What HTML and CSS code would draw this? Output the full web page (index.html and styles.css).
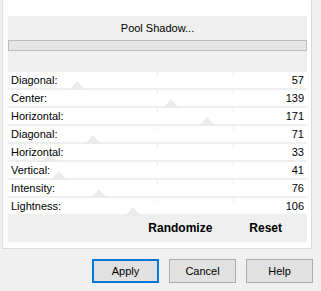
FILE: index.html
```html
<!DOCTYPE html>
<html lang="en">
<head>
    <meta charset="UTF-8">
    <title>Pool Shadow</title>
    <link rel="stylesheet" href="styles.css">
</head>
<body>
    <div class="pane">
        <div class="panel">
            <div class="panel-title">Pool Shadow...</div>
            <div class="progress"></div>

            <!-- Parameter rows, thumb position = value on a 0..255 track -->
            <div class="rows">
                <div class="row"><span class="thumb" style="left: 61px"></span><span class="label">Diagonal:</span><span class="value">57</span></div>
                <div class="row"><span class="thumb" style="left: 155px"></span><span class="label">Center:</span><span class="value">139</span></div>
                <div class="row"><span class="thumb" style="left: 191px"></span><span class="label">Horizontal:</span><span class="value">171</span></div>
                <div class="row"><span class="thumb" style="left: 77px"></span><span class="label">Diagonal:</span><span class="value">71</span></div>
                <div class="row"><span class="thumb" style="left: 34px"></span><span class="label">Horizontal:</span><span class="value">33</span></div>
                <div class="row"><span class="thumb" style="left: 43px"></span><span class="label">Vertical:</span><span class="value">41</span></div>
                <div class="row"><span class="thumb" style="left: 83px"></span><span class="label">Intensity:</span><span class="value">76</span></div>
                <div class="row"><span class="thumb" style="left: 117px"></span><span class="label">Lightness:</span><span class="value">106</span></div>
            </div>

            <div class="panel-actions">
                <span class="action">Randomize</span>
                <span class="action">Reset</span>
            </div>
        </div>
    </div>

    <div class="footer">
        <button class="btn btn-default">Apply</button>
        <button class="btn">Cancel</button>
        <button class="btn">Help</button>
    </div>
</body>
</html>
```

FILE: styles.css
```css
body {
    font-family: 'Liberation Sans', Arial, sans-serif;
    font-size: 11px;
    color: #000;
    margin: 0;
    padding: 0;
    width: 321px;
    height: 291px;
    overflow: hidden;
    background-color: #f0f0f0;
}

/* White scroll pane */
.pane {
    margin-left: 2px;
    width: 310px;
    height: 249px;
    box-sizing: border-box;
    padding: 16px 4px 0 5px;
    background-color: #fff;
    border-left: 1px solid #e2e2e2;
    border-right: 1px solid #dadada;
    border-bottom: 1px solid #dadada;
}

.panel {
    background-color: #efefef;
    display: flex;
    flex-direction: column;
}

.panel-title {
    height: 24px;
    line-height: 24px;
    text-align: center;
}

.progress {
    height: 11px;
    box-sizing: border-box;
    border: 1px solid #bcbcbc;
    background-color: #e6e6e6;
    margin-bottom: 21px;
}

/* Rows */
.rows {
    display: flex;
    flex-direction: column;
    gap: 2px;
}

.row {
    position: relative;
    height: 16px;
    line-height: 16px;
    padding: 0 3px;
    display: flex;
    justify-content: space-between;
    background-color: #fff;
}

.row::before,
.row::after {
    content: '';
    position: absolute;
    top: 0;
    width: 1px;
    height: 4px;
    background-color: #ececec;
}

.row::before {
    left: 149px;
}

.row::after {
    left: 225px;
}

.thumb {
    position: absolute;
    bottom: -2px;
    width: 0;
    height: 0;
    border-left: 8px solid transparent;
    border-right: 8px solid transparent;
    border-bottom: 9px solid #ebebeb;
}

.label,
.value {
    position: relative;
}

.panel-actions {
    height: 28px;
    line-height: 28px;
    display: flex;
    justify-content: flex-end;
    gap: 37px;
    padding-right: 25px;
    font-size: 12px;
    font-weight: bold;
}

/* Dialog buttons */
.footer {
    display: flex;
    justify-content: flex-end;
    gap: 10px;
    padding: 10px 8px 0 0;
}

.btn {
    width: 67px;
    height: 24px;
    box-sizing: border-box;
    padding: 0;
    font-family: inherit;
    font-size: 11px;
    color: #000;
    background-color: #e1e1e1;
    border: 1px solid #adadad;
}

.btn-default {
    border-color: #0078d7;
    box-shadow: inset 0 0 0 1px #0078d7;
}
```
